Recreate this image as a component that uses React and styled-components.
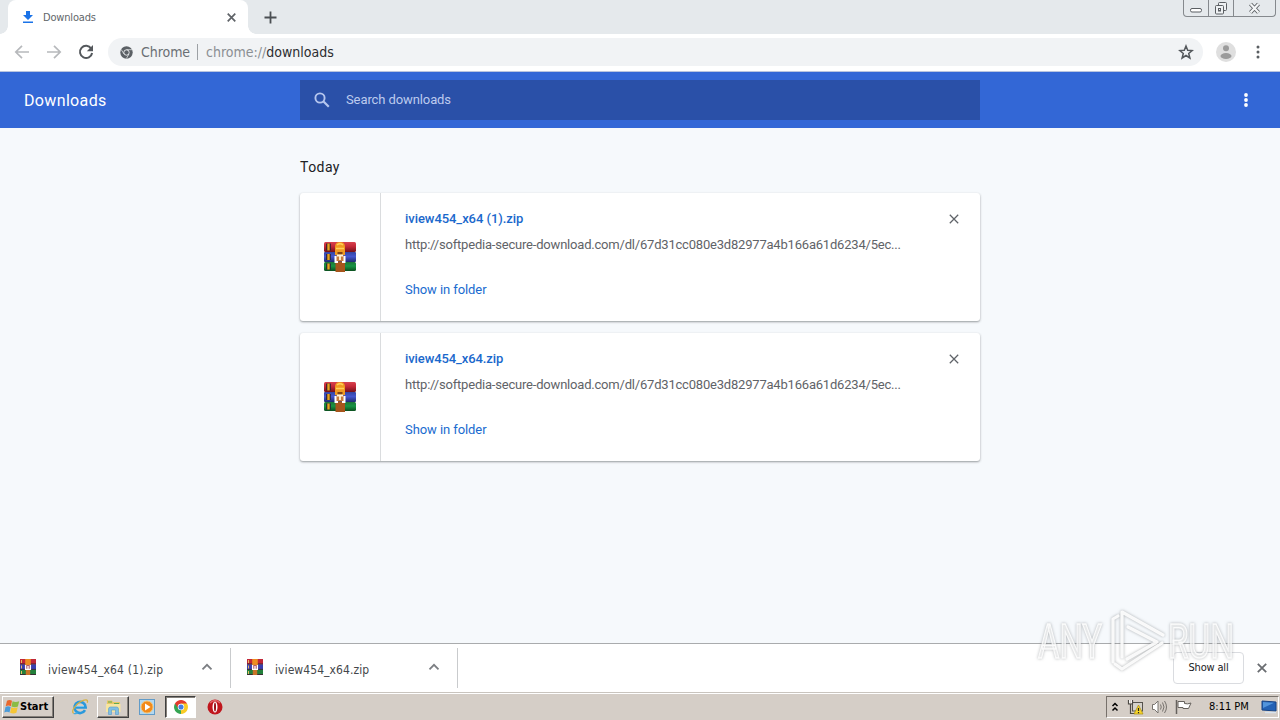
import styled, { createGlobalStyle } from 'styled-components';

const GlobalStyle = createGlobalStyle`
  * { box-sizing: border-box; }
  body {
    margin: 0;
    overflow: hidden;
    background: #f6f9fc;
    font-family: Roboto, "Liberation Sans", sans-serif;
  }
  svg { display: block; flex: none; }
`;

const uiFont = '"DejaVu Sans Condensed", "DejaVu Sans", sans-serif';

const Screen = styled.div`
  position: relative;
  width: 1280px;
  height: 720px;
  display: flex;
  flex-direction: column;
  overflow: hidden;
`;

const Label = styled.span`
  white-space: nowrap;
  font-family: ${(p) => p.$font || 'inherit'};
  font-size: ${(p) => p.$size}px;
  font-weight: ${(p) => p.$weight || 400};
  letter-spacing: ${(p) => p.$spacing || 0}px;
  line-height: 16px;
  color: ${(p) => p.$color || '#000'};
`;

/* ---- browser frame ---- */

const TabStrip = styled.div`
  height: 34px;
  background: #e5e9ec;
  display: flex;
  justify-content: space-between;
  padding: 0 4px 0 8px;
`;

const TabGroup = styled.div`
  display: flex;
  align-items: center;
  gap: 16px;
`;

const Tab = styled.div`
  position: relative;
  width: 240px;
  height: 34px;
  background: #fff;
  border-radius: 8px 8px 0 0;
  display: flex;
  align-items: center;
  padding: 0 12px 0 14px;

  &::before,
  &::after {
    content: '';
    position: absolute;
    bottom: 0;
    width: 8px;
    height: 8px;
  }
  &::before {
    left: -8px;
    background: radial-gradient(circle at 0 0, transparent 7.5px, #fff 8px);
  }
  &::after {
    right: -8px;
    background: radial-gradient(circle at 100% 0, transparent 7.5px, #fff 8px);
  }
`;

const TabTitle = styled.div`
  flex: 1;
  display: flex;
  padding: 1px 0 0 9px;
`;

const WindowButtons = styled.div`
  width: 93px;
  height: 17px;
  display: flex;
  border: 1px solid #85898d;
  border-top: none;
  border-radius: 0 0 4px 4px;
`;

const WindowButton = styled.div`
  width: ${(p) => p.$width}px;
  display: flex;
  justify-content: center;
  border-right: ${(p) => (p.$last ? 'none' : '1px solid #85898d')};
`;

const Toolbar = styled.div`
  height: 38px;
  background: #fff;
  border-bottom: 1px solid #b9c5df;
  display: flex;
  align-items: center;
  padding: 0 14px 1px 14px;
`;

const NavButtons = styled.div`
  width: 94px;
  display: flex;
  gap: 16px;
`;

const Omnibox = styled.div`
  width: 1095px;
  height: 28px;
  border-radius: 14px;
  background: #f1f3f5;
  display: flex;
  align-items: center;
  padding: 0 9px 0 12px;
`;

const OmniLead = styled.div`
  display: flex;
  padding-left: 8px;
`;

const OmniDivider = styled.div`
  width: 1px;
  height: 16px;
  margin: 0 8px 0 7px;
  background: #9da1a5;
`;

const Url = styled.div`
  flex: 1;
  display: flex;
`;

const ToolbarEnd = styled.div`
  flex: 1;
  display: flex;
  align-items: center;
  justify-content: space-between;
  padding-left: 13px;
`;

/* ---- downloads page ---- */

const PageHeader = styled.header`
  height: 56px;
  background: #3367d6;
  display: grid;
  grid-template-columns: 276px 680px 1fr;
  align-items: center;
  padding: 0 26px 0 24px;
`;

const PageTitle = styled.div`
  display: flex;
  padding-top: 2px;
`;

const SearchBox = styled.div`
  height: 40px;
  background: #2a50a8;
  display: flex;
  align-items: center;
  gap: 14px;
  padding-left: 12px;
`;

const MenuButton = styled.div`
  display: flex;
  justify-content: flex-end;
`;

const Content = styled.main`
  flex: 1;
  background: #f6f9fc;
  padding: 31px 300px 0;
`;

const DayHeading = styled.h2`
  margin: 0 0 18px;
  height: 16px;
  display: flex;
`;

const Card = styled.article`
  height: 128px;
  margin-bottom: 12px;
  background: #fff;
  border-radius: 3px;
  box-shadow: 0 1px 2px rgba(60, 64, 67, 0.4), 0 1px 3px rgba(60, 64, 67, 0.15);
  display: flex;
`;

const CardIcon = styled.div`
  width: 81px;
  border-right: 1px solid #dadcde;
  display: flex;
  align-items: center;
  justify-content: center;
  padding-bottom: 1px;
`;

const CardBody = styled.div`
  flex: 1;
  display: flex;
  flex-direction: column;
  align-items: flex-start;
  padding: 18px 0 0 24px;
`;

const CardUrl = styled.div`
  display: flex;
  margin: 10px 0 29px;
`;

const CardClose = styled.div`
  padding: 21px 21px 0 0;
`;

/* ---- download shelf ---- */

const Shelf = styled.footer`
  height: 49px;
  background: #fff;
  border-top: 1px solid #a9abad;
  display: flex;
  align-items: center;
  padding-right: 13px;
`;

const ShelfItem = styled.div`
  width: ${(p) => p.$width}px;
  height: 40px;
  border-right: 1px solid #c9cbcd;
  display: flex;
  align-items: center;
  padding: 0 17px 2px ${(p) => p.$inset}px;
`;

const ShelfName = styled.div`
  flex: 1;
  display: flex;
  padding: 5px 0 0 12px;
`;

const ShelfEnd = styled.div`
  margin-left: auto;
  display: flex;
  align-items: center;
  gap: 13px;
  padding-bottom: 1px;
`;

const ShowAll = styled.div`
  width: 71px;
  height: 32px;
  border: 1px solid #dadce0;
  border-radius: 4px;
  display: flex;
  align-items: center;
  justify-content: center;
`;

/* ---- windows taskbar ---- */

const Taskbar = styled.div`
  height: 28px;
  background: #d5cec7;
  border-top: 1px solid #c9c4be;
  box-shadow: inset 0 1px 0 #fff;
  display: flex;
  align-items: center;
  padding: 1px 1px 0 2px;
`;

const StartButton = styled.div`
  width: 52px;
  height: 22px;
  border: 1px solid;
  border-color: #fff #404040 #404040 #fff;
  box-shadow: inset -1px -1px 0 #85807a;
  display: flex;
  align-items: center;
  padding-left: 1px;
`;

const QuickLaunch = styled.div`
  display: flex;
  align-items: center;
  margin-left: 9px;
`;

const TaskButton = styled.div`
  width: ${(p) => p.$width}px;
  height: 22px;
  display: flex;
  align-items: center;
  justify-content: center;
  border: 1px solid transparent;
  ${(p) => p.$raised && 'border-color: #fff #404040 #404040 #fff; box-shadow: inset -1px -1px 0 #85807a;'}
  ${(p) => p.$active && 'border-color: #404040 #fff #fff #404040; background: #fff; box-shadow: inset 1px 1px 0 #85807a;'}
`;

const Tray = styled.div`
  width: 173px;
  height: 22px;
  margin-left: auto;
  border: 1px solid;
  border-color: #77716b #fff #fff #77716b;
  display: flex;
  align-items: center;
  padding-left: 4px;
`;

const TrayIcons = styled.div`
  width: 98px;
  display: flex;
  align-items: center;
  gap: 7px;
`;

const DesktopIcon = styled.div`
  margin-left: auto;
`;

const Watermark = styled.svg`
  position: absolute;
  left: 1030px;
  top: 602px;
  filter: drop-shadow(0 0 1.5px rgba(80, 85, 90, 0.5));
`;

/* ---- drawings ---- */

const Dots = ({ color, r = 1.7, gap = 5 }) => (
  <svg width="16" height="16" viewBox="0 0 16 16" fill={color}>
    <circle cx="8" cy={8 - gap} r={r} />
    <circle cx="8" cy="8" r={r} />
    <circle cx="8" cy={8 + gap} r={r} />
  </svg>
);

const Cross = ({ size = 10, width = 1.6, color = '#5f6368' }) => (
  <svg width={size} height={size} viewBox="0 0 10 10" stroke={color} strokeWidth={width}>
    <path d="M.8.8l8.4 8.4M9.2.8L.8 9.2" />
  </svg>
);

const ArchiveIcon = () => (
  <svg width="32" height="31" viewBox="0 0 32 31">
    <defs>
      <linearGradient id="bookRed" x2="0" y2="1">
        <stop offset="0" stopColor="#d8424e" />
        <stop offset=".45" stopColor="#c22838" />
        <stop offset="1" stopColor="#741019" />
      </linearGradient>
      <linearGradient id="bookBlue" x2="0" y2="1">
        <stop offset="0" stopColor="#3445a0" />
        <stop offset=".45" stopColor="#4557cf" />
        <stop offset="1" stopColor="#202a70" />
      </linearGradient>
      <linearGradient id="bookGreen" x2="0" y2="1">
        <stop offset="0" stopColor="#1d7439" />
        <stop offset=".45" stopColor="#179544" />
        <stop offset="1" stopColor="#0b4f1e" />
      </linearGradient>
    </defs>
    <rect x="0" y="1" width="32" height="10" rx="1.5" fill="url(#bookRed)" />
    <rect x="0" y="11" width="32" height="10" rx="1" fill="url(#bookBlue)" />
    <rect x="0" y="21" width="32" height="9" rx="1.5" fill="url(#bookGreen)" />
    <path d="M4.500 2.500v7M4.500 13v6M4.500 22.500v6" stroke="#2a2030" strokeWidth="4.600" />
    <path d="M4.500 2.500v7M4.500 13v6M4.500 22.500v6" stroke="#e9a51b" strokeWidth="2.400" />
    <rect x="11.500" y="21" width="9.500" height="10" fill="#a7561c" />
    <path d="M11 14V6q0-5 5-5t5 5v8z" fill="#f19a20" />
    <path d="M13 4q3-2.500 6 0M12 7.500h8" stroke="#ffd05a" strokeWidth="1.600" fill="none" />
    <path d="M13.500 11h5v2.500h-5z" fill="#804215" />
    <path d="M12 14.500h8v6h-8z" fill="#c97b3c" />
    <path d="M11.500 22v-7M20.500 22v-7M10.500 21h3.500M18 21h3.500" stroke="#fff" strokeWidth="2" />
    <path d="M13 14.500h6M16 14v5" stroke="#fff4d8" strokeWidth="1.800" />
  </svg>
);

const ArchiveSmall = () => (
  <svg width="16" height="16" viewBox="0 0 16 16">
    <rect width="16" height="5.4" fill="#c12738" />
    <rect y="5.3" width="16" height="5.4" fill="#3a3fae" />
    <rect y="10.6" width="16" height="5.2" fill="#23803b" />
    <path d="M0 5h16M0 10.4h16M0 15.5h16" stroke="#35222f" strokeWidth=".9" />
    <path d="M1.500 1v3M1.500 6.500v3M1.500 12v3" stroke="#e6bd62" strokeWidth="1" />
    <rect x="5.200" y="0" width="5.600" height="6" fill="#ed8d22" />
    <rect x="5.800" y="10" width="4.400" height="6" fill="#c87428" />
    <path d="M5.600 6v4.400h4.800V6M8 7v3" stroke="#fff" strokeWidth="1.300" fill="#b35a68" />
  </svg>
);

const ChromeGrey = () => (
  <svg width="13" height="13" viewBox="0 0 13 13">
    <circle cx="6.500" cy="6.500" r="6.200" fill="#5b6065" />
    <circle cx="6.500" cy="6.500" r="2.700" fill="#5b6065" stroke="#f1f3f5" strokeWidth=".9" />
    <path d="M6.500 3.700h5.500M4 8L1.200 3.500M9 8l-2.600 4.500" stroke="#f1f3f5" strokeWidth=".7" />
  </svg>
);

const ChromeColor = () => (
  <svg width="14" height="14" viewBox="0 0 16 16">
    <path d="M8 8V0l6.900 4A8 8 0 0 1 8 16z" fill="#f9cb25" />
    <path d="M8 8v8A8 8 0 0 1 1.100 4z" fill="#35a553" />
    <path d="M1.100 4A8 8 0 0 1 14.900 4H8L4.800 9.400z" fill="#e33b2e" />
    <circle cx="8" cy="8" r="3.700" fill="#fff" />
    <circle cx="8" cy="8" r="2.900" fill="#447ee4" />
  </svg>
);

const WindowsFlag = () => (
  <svg width="16" height="16" viewBox="0 0 16 16">
    <path d="M3 1.700Q5.500.200 8 1.700L6.900 7.200Q4.300 6 1.700 7.300z" fill="#e8672c" />
    <path d="M8.600 2.200q2.800 1.500 6.600 0l-1.300 5.300q-3 1.300-6.500-.1z" fill="#8abb45" />
    <path d="M1.500 7.900Q4 6.700 6.700 7.900l-1.200 5.500Q3 12.200.300 13.400z" fill="#4b9bd8" />
    <path d="M7.300 8.200q3 1.400 6.400.1l-1.300 5.500q-3 1.400-6.300-.1z" fill="#f5c535" />
  </svg>
);

const ExplorerE = () => (
  <svg width="18" height="18" viewBox="0 0 18 18" fill="none">
    <path d="M14 12.200A5.600 5.600 0 1 1 14.700 9.400H5" stroke="#2a99dc" strokeWidth="2.600" />
    <path d="M5 8.500h8" stroke="#72c7f2" strokeWidth="1" />
    <path d="M2.800 15.500C-.5 14 4 7 9 4s8.500-3 7.300.8" stroke="#d6b244" strokeWidth="1.300" />
    <path d="M2.800 15.500Q4 16.200 6.500 14.600" stroke="#3faae2" strokeWidth="1.300" />
  </svg>
);

const FolderIcon = () => (
  <svg width="17" height="16" viewBox="0 0 17 16">
    <path d="M2 3.500V1.500h5l1 1.500h7v10H2z" fill="#e8c765" />
    <path d="M1 5h14.500v8H1z" fill="#f7e5a0" />
    <path d="M3 3h4M9 4.500h5" stroke="#61a953" strokeWidth="1" />
    <path d="M3.500 15.500V10q0-2 2-2h6q2 0 2 2v5.500h-3V11H6.500v4.500z" fill="#80bfe3" stroke="#579bc8" strokeWidth=".6" />
  </svg>
);

const PlayerIcon = () => (
  <svg width="16" height="16" viewBox="0 0 16 16">
    <rect x=".5" y=".5" width="15" height="15" fill="#b3d8f0" stroke="#619bc8" />
    <circle cx="8" cy="8" r="6" fill="#f28a19" stroke="#f9c26c" />
    <path d="M6 4.500l5.500 3.500L6 11.500z" fill="#fff" />
  </svg>
);

const OperaIcon = () => (
  <svg width="16" height="16" viewBox="0 0 16 16">
    <circle cx="8" cy="8" r="7.500" fill="#c0161d" />
    <path d="M3 4q5-5 10 0" stroke="#e2686a" strokeWidth="1.500" fill="none" />
    <ellipse cx="8" cy="8" rx="2.500" ry="5.600" fill="#fff" />
    <ellipse cx="8" cy="8" rx="1" ry="4.600" fill="#981016" />
  </svg>
);

const Chevron = () => (
  <svg width="12" height="8" viewBox="0 0 12 8" fill="none" stroke="#7b7e82" strokeWidth="1.800">
    <path d="M1.500 6.300L6 1.800l4.500 4.500" />
  </svg>
);

const DownloadCard = ({ name, spacing }) => (
  <Card>
    <CardIcon><ArchiveIcon /></CardIcon>
    <CardBody>
      <Label $size={13} $weight={500} $spacing={spacing} $color="#1a68cc">{name}</Label>
      <CardUrl>
        <Label $size={13} $spacing={-0.2} $color="#5f6368">
          http://softpedia-secure-download.com/dl/67d31cc080e3d82977a4b166a61d6234/5ec...
        </Label>
      </CardUrl>
      <Label $size={13} $spacing={-0.08} $color="#1a6bcf">Show in folder</Label>
    </CardBody>
    <CardClose><Cross width={1.25} /></CardClose>
  </Card>
);

export default function App() {
  return (
    <Screen>
      <GlobalStyle />
      <TabStrip>
        <TabGroup>
          <Tab>
            <svg width="12" height="12" viewBox="0 0 12 12" fill="#1a73e8">
              <path d="M4 0h4v4h3L6 9 1 4h3zM1 10.500h10V12H1z" />
            </svg>
            <TabTitle><Label $font={uiFont} $size={11} $spacing={-0.18} $color="#62666a">Downloads</Label></TabTitle>
            <Cross size={9} width={1.9} />
          </Tab>
          <svg width="13" height="13" viewBox="0 0 13 13" stroke="#4b4f53" strokeWidth="1.800">
            <path d="M6.500.5v12M.5 6.500h12" />
          </svg>
        </TabGroup>
        <WindowButtons>
          <WindowButton $width={25}>
            <svg width="13" height="15" viewBox="0 0 13 15" fill="#fff" stroke="#5b5f63">
              <rect x=".5" y="8.500" width="11" height="3.500" rx="1.500" />
            </svg>
          </WindowButton>
          <WindowButton $width={25}>
            <svg width="14" height="16" viewBox="0 0 14 16" fill="#eef1f3" stroke="#5b5f63">
              <rect x="4.500" y="2.500" width="8" height="8" rx="1" />
              <rect x="1.500" y="5.500" width="8" height="8.500" rx="1" />
              <rect x="4.500" y="8.500" width="2" height="2.500" />
            </svg>
          </WindowButton>
          <WindowButton $width={41} $last>
            <svg width="13" height="15" viewBox="0 0 13 15" fill="none">
              <path d="M2.500 4l8 8.500M10.500 4l-8 8.500" stroke="#5b5f63" strokeWidth="4" />
              <path d="M2.500 4l8 8.500M10.500 4l-8 8.500" stroke="#f4f6f7" strokeWidth="2.200" />
            </svg>
          </WindowButton>
        </WindowButtons>
      </TabStrip>

      <Toolbar>
        <NavButtons>
          <svg width="16" height="16" viewBox="0 0 16 16" fill="none" stroke="#b7b9bc" strokeWidth="1.700">
            <path d="M15 8H2M8 1.800L1.800 8 8 14.200" />
          </svg>
          <svg width="16" height="16" viewBox="0 0 16 16" fill="none" stroke="#b7b9bc" strokeWidth="1.700">
            <path d="M1 8h13M8 1.800L14.200 8 8 14.200" />
          </svg>
          <svg width="16" height="16" viewBox="0 0 16 16">
            <path d="M13.200 4.600A6.100 6.100 0 1 0 14.100 9" fill="none" stroke="#54585c" strokeWidth="2" />
            <path d="M15 1v6.200H8.800z" fill="#54585c" />
          </svg>
        </NavButtons>
        <Omnibox>
          <ChromeGrey />
          <Url>
            <OmniLead><Label $font={uiFont} $size={14} $spacing={-0.05} $color="#6a6f74">Chrome</Label></OmniLead>
            <OmniDivider />
            <Label $font={uiFont} $size={14} $spacing={0} $color="#8b8f93">chrome://</Label>
            <Label $font={uiFont} $size={14} $spacing={0} $color="#2c2d30">downloads</Label>
          </Url>
          <svg width="16" height="16" viewBox="0 0 16 16" fill="none" stroke="#54585c" strokeWidth="1.500">
            <path d="M8 2l1.700 4.300 4.500.3-3.500 2.900 1.200 4.500L8 11.500 4.100 14l1.200-4.500-3.500-2.900 4.500-.3z" />
          </svg>
        </Omnibox>
        <ToolbarEnd>
          <svg width="20" height="20" viewBox="0 0 20 20">
            <circle cx="10" cy="10" r="10" fill="#dfdfdf" />
            <circle cx="10" cy="6.200" r="3" fill="#9b9b9b" />
            <ellipse cx="10" cy="14" rx="5.500" ry="3" fill="#9b9b9b" />
          </svg>
          <Dots color="#5a5e62" r={1.5} />
        </ToolbarEnd>
      </Toolbar>

      <PageHeader>
        <PageTitle><Label $size={16} $spacing={0.35} $color="#fff">Downloads</Label></PageTitle>
        <SearchBox>
          <svg width="20" height="20" viewBox="0 0 20 20" fill="none" stroke="#b5c6ee">
            <circle cx="8" cy="8" r="4.600" strokeWidth="1.900" />
            <path d="M11.500 11.500l5.300 5.300" strokeWidth="2.200" />
          </svg>
          <Label $size={13} $spacing={-0.1} $color="#bdcbee">Search downloads</Label>
        </SearchBox>
        <MenuButton><Dots color="#fff" r={1.9} /></MenuButton>
      </PageHeader>

      <Content>
        <DayHeading><Label $size={14} $spacing={0.45} $color="#202124">Today</Label></DayHeading>
        <DownloadCard name="iview454_x64 (1).zip" spacing={-0.06} />
        <DownloadCard name="iview454_x64.zip" spacing={-0.1} />
      </Content>

      <Shelf>
        <ShelfItem $width={231} $inset={20}>
          <ArchiveSmall />
          <ShelfName><Label $font={uiFont} $size={12} $spacing={0.18} $color="#44474a">iview454_x64 (1).zip</Label></ShelfName>
          <Chevron />
        </ShelfItem>
        <ShelfItem $width={227} $inset={16}>
          <ArchiveSmall />
          <ShelfName><Label $font={uiFont} $size={12} $spacing={0.08} $color="#44474a">iview454_x64.zip</Label></ShelfName>
          <Chevron />
        </ShelfItem>
        <ShelfEnd>
          <ShowAll><Label $font={uiFont} $size={11} $spacing={-0.18} $color="#202124">Show all</Label></ShowAll>
          <Cross width={1.8} color="#6a6d71" />
        </ShelfEnd>
      </Shelf>

      <Taskbar>
        <StartButton>
          <WindowsFlag />
          <Label $font={uiFont} $size={11} $weight={700} $spacing={0}>Start</Label>
        </StartButton>
        <QuickLaunch>
          <TaskButton $width={34}><ExplorerE /></TaskButton>
          <TaskButton $width={32} $raised><FolderIcon /></TaskButton>
          <TaskButton $width={36}><PlayerIcon /></TaskButton>
          <TaskButton $width={31} $active><ChromeColor /></TaskButton>
          <TaskButton $width={37}><OperaIcon /></TaskButton>
        </QuickLaunch>
        <Tray>
          <TrayIcons>
            <svg width="9" height="12" viewBox="0 0 9 12" fill="none" stroke="#000" strokeWidth="1.500">
              <path d="M1.500 5l2.500-2.500L6.500 5M1.500 9.500L4 7l2.500 2.500" />
            </svg>
            <svg width="17" height="16" viewBox="0 0 17 16">
              <rect x="5.500" y="3.500" width="10" height="8.500" fill="#d5d2cc" stroke="#55524d" />
              <path d="M1.500 1v4h4V1M3.500 5v9.500H10" fill="none" stroke="#4c4944" strokeWidth="1.200" />
              <path d="M2.500 1v3M4.500 1v3" stroke="#fff" strokeWidth=".8" />
              <path d="M11.500 6l4.500 9H7z" fill="#f7d52a" stroke="#a98c10" strokeWidth=".7" />
              <path d="M11.500 9v3M11.500 13v1.200" stroke="#222" strokeWidth="1.200" />
            </svg>
            <svg width="17" height="16" viewBox="0 0 17 16" fill="none" stroke="#77736e">
              <path d="M1.500 5.500h2L7 2v12l-3.500-3.500h-2z" fill="#fff" />
              <path d="M9.500 5.500q1.500 2.500 0 5M11.500 3.500q3 4.500 0 9M13.500 2q4 6 0 12" />
            </svg>
            <svg width="17" height="16" viewBox="0 0 17 16" fill="#fff" stroke="#66625d">
              <path d="M3 2.500h6.500v2q3 1 6.500-.5l-2.500 5.500H8V8.500H3z" />
              <path d="M1.500 1v14" strokeWidth="1.500" />
            </svg>
          </TrayIcons>
          <Label $font={uiFont} $size={11} $spacing={0}>8:11 PM</Label>
          <DesktopIcon>
            <svg width="17" height="16" viewBox="0 0 17 16">
              <path d="M1 2l14 1v9L1 11z" fill="#2362b5" stroke="#174383" />
              <path d="M2 3l11 .8L2 9z" fill="#5295dc" />
              <path d="M4 13.500h11" stroke="#d8e3ed" strokeWidth="1.500" />
            </svg>
          </DesktopIcon>
        </Tray>
      </Taskbar>

      <Watermark width="250" height="90" viewBox="0 0 250 90" fill="none">
        <g stroke="rgba(255,255,255,.85)" strokeWidth="1.500" fill="rgba(255,255,255,.6)" fontFamily="Roboto, sans-serif" fontWeight="400" fontSize="49">
          <text x="8" y="56" textLength="64" lengthAdjust="spacingAndGlyphs">ANY</text>
          <text x="138" y="56" textLength="66" lengthAdjust="spacingAndGlyphs">RUN</text>
        </g>
        <g stroke="rgba(255,255,255,.9)" strokeWidth="3.200" strokeLinejoin="round" strokeLinecap="round">
          <path d="M92 55V10l41 23" />
          <path d="M98 25l29 15-30 17" />
          <path d="M132 41L92 67l-7-5" />
          <path d="M88 14l-5 3v43" />
        </g>
      </Watermark>
    </Screen>
  );
}
